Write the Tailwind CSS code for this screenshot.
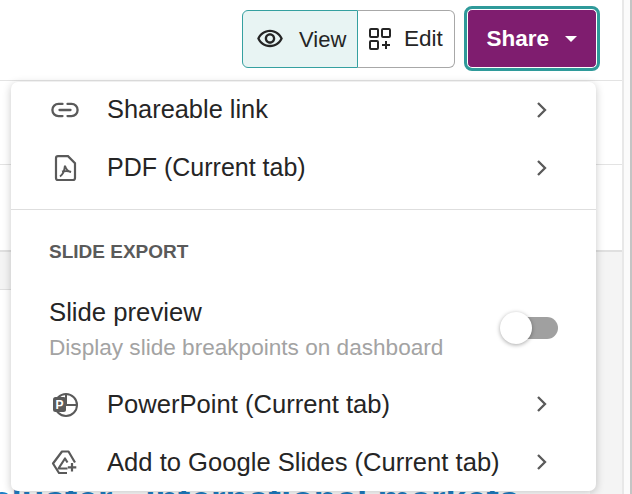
<!DOCTYPE html>
<html>
<head>
<meta charset="utf-8">
<script src="https://cdn.jsdelivr.net/npm/@tailwindcss/browser@4"></script>
</head>
<body class="m-0 bg-white">
<div class="relative w-[632px] h-[494px] overflow-hidden bg-white font-['Liberation_Sans',Arial,sans-serif] text-[#252525]">
  <!-- Header -->
  <header class="h-[81px] w-[622px] border-b border-[#e3e3e3] flex justify-end items-start pt-[10px] pr-[25px] gap-[12px]">
    <div class="flex h-[58px] w-[213px] text-[22px]">
      <div class="w-[116px] bg-[#e8f4f3] border border-[#35a0a0] rounded-l-[6px] flex items-center pl-[13px] gap-[15px]">
        <svg class="w-[28px] h-[28px] shrink-0" viewBox="0 0 24 24" fill="#252525"><path d="M12 6c3.790 0 7.170 2.130 8.820 5.500C19.170 14.870 15.790 17 12 17s-7.170-2.130-8.820-5.500C4.830 8.130 8.210 6 12 6m0-2C7 4 2.730 7.110 1 11.500 2.730 15.890 7 19 12 19s9.270-3.110 11-7.500C21.270 7.110 17 4 12 4zm0 5c1.380 0 2.500 1.120 2.500 2.500S13.380 14 12 14s-2.500-1.120-2.500-2.500S10.620 9 12 9m0-2c-2.480 0-4.500 2.020-4.500 4.500S9.520 16 12 16s4.500-2.020 4.500-4.500S14.480 7 12 7z"/></svg>
        <span>View</span>
      </div>
      <div class="flex-1 flex items-center pl-[11px] gap-[13px] border border-l-0 border-[#a8a8a8] rounded-r-[6px]">
        <svg class="w-[22px] h-[22px] shrink-0" viewBox="0 0 22 22" fill="none" stroke="#252525" stroke-width="2"><rect x="1" y="1" width="8" height="8" rx="1"/><rect x="13" y="1" width="8" height="8" rx="1"/><rect x="1" y="13" width="8" height="8" rx="1"/><path d="M17 13v8M13 17h8"/></svg>
        <span class="text-[22.5px]">Edit</span>
      </div>
    </div>
    <button class="h-[59px] w-[130px] -mt-px rounded-[5px] bg-[#7f1d6f] border-[1.5px] border-white outline-[3px] outline-[#2f9a9a] flex items-center pl-[18.500px] text-white font-bold text-[22.5px]">
      Share
      <svg class="ml-[16px] w-[12px] h-[6px] shrink-0" viewBox="0 0 12 6" fill="#fff"><path d="M0 0h12L6 6Z"/></svg>
    </button>
  </header>

  <!-- Background behind menu -->
  <div class="absolute left-0 top-[164px] w-[622px] h-px bg-[#e3e3e3]"></div>
  <div class="absolute left-0 top-[250px] w-[20px] h-[40px] bg-[#f4f4f4] border-t-2 border-b border-[#e0e0e0]"></div>
  <div class="absolute left-[590px] top-[250px] w-[32px] h-[244px] bg-[#f4f4f4] border-t-2 border-[#e0e0e0]"></div>
  <div class="absolute left-[622px] top-0 w-[2px] h-[494px] bg-[#e8e8e8]"></div>
  <div class="absolute left-[624px] top-0 w-[6px] h-[494px] bg-[#fbfbfb]"></div>
  <div class="absolute left-[630px] top-0 w-[2px] h-[494px] bg-[#c4c4c4]"></div>
  <div class="absolute left-[-9px] top-[478px] text-[#1f7fc4] font-bold text-[37px] leading-[44px] whitespace-nowrap">cluster - international markets</div>

  <!-- Menu -->
  <div class="absolute left-[11px] top-[82px] w-[585px] h-[409px] bg-white rounded-[7px] shadow-[0_2px_8px_rgba(0,0,0,0.22)]">
    <div class="h-[128px] border-b border-[#dedede]">
      <div class="h-[55px] flex items-center pl-[38px] pr-[48px]">
        <svg class="w-[32px] h-[32px] shrink-0" viewBox="0 0 32 32" fill="none" stroke="#5a5a5a" stroke-width="2.300" stroke-linecap="round"><path d="M13.500 9.900H9.500a6.100 6.100 0 0 0 0 12.200h4M18.500 9.900h4a6.100 6.100 0 0 1 0 12.200h-4M10.500 16h11"/></svg>
        <span class="ml-[26px] text-[25.4px] flex-1">Shareable link</span>
        <svg class="w-[12px] h-[18px] shrink-0" viewBox="0 0 12 18" fill="none" stroke="#5a5a5a" stroke-width="2.300"><path d="M2 2l7 7-7 7"/></svg>
      </div>
      <div class="h-[61px] flex items-center pl-[38px] pr-[48px]">
        <svg class="w-[32px] h-[32px] shrink-0" viewBox="0 0 32 32" fill="none" stroke="#5a5a5a" stroke-width="2.200"><path d="M9 4.200h10l7 7v14.800a2 2 0 0 1-2 2H9a2 2 0 0 1-2-2V6.200a2 2 0 0 1 2-2Z"/><path stroke-width="2" d="M11 24.500c3-2 4.500-6 5-11M13 19.500c3-.8 6.500-.8 9 .5M16 14c1 3 3 5.500 6 6"/></svg>
        <span class="ml-[26px] text-[25px] flex-1">PDF (Current tab)</span>
        <svg class="w-[12px] h-[18px] shrink-0" viewBox="0 0 12 18" fill="none" stroke="#5a5a5a" stroke-width="2.300"><path d="M2 2l7 7-7 7"/></svg>
      </div>
    </div>
    <div class="pl-[38px] pr-[38px] pt-[30px] text-[19px] leading-[24px] font-bold text-[#5a5a5a]">SLIDE EXPORT</div>
    <div class="relative flex pl-[38px] pt-[33px]">
      <div class="flex-1">
        <div class="text-[25.7px] leading-[30px]">Slide preview</div>
        <div class="text-[22.6px] leading-[28px] mt-[7px] text-[#a3a3a3]">Display slide breakpoints on dashboard</div>
      </div>
      <div class="relative w-[48px] h-[22px] rounded-full bg-[#a0a0a0] mr-[38px] mt-[20px]">
        <div class="absolute left-[-10px] top-[-5px] w-[32px] h-[32px] rounded-full bg-white shadow-[0_1px_4px_rgba(0,0,0,0.35)]"></div>
      </div>
    </div>
    <div class="h-[58px] mt-[13px] flex items-center pl-[38px] pr-[48px]">
      <svg class="w-[32px] h-[32px] shrink-0" viewBox="0 0 32 32" fill="none" stroke="#5a5a5a" stroke-width="2"><circle cx="17" cy="17" r="11"/><path d="M17 6v11h11"/><rect x="4" y="9" width="13" height="15" rx="2.500" fill="#5a5a5a" stroke="none"/><text x="10.500" y="21" text-anchor="middle" fill="#fff" stroke="none" font-size="12" font-weight="700" font-family="Liberation Sans">P</text></svg>
      <span class="ml-[26px] text-[25.6px] flex-1">PowerPoint (Current tab)</span>
      <svg class="w-[12px] h-[18px] shrink-0" viewBox="0 0 12 18" fill="none" stroke="#5a5a5a" stroke-width="2.300"><path d="M2 2l7 7-7 7"/></svg>
    </div>
    <div class="h-[58px] flex items-center pl-[38px] pr-[48px]">
      <svg class="w-[32px] h-[32px] shrink-0" viewBox="0 0 32 32" fill="none" stroke="#5a5a5a" stroke-width="2.200" stroke-linejoin="round"><path d="M18 27H10L4 17.500 13 5.500h6.500L26 16.500"/><path d="M18.500 22.500H9.500L16 12.500l2.500 4"/><path d="M23 17v8.500M18.800 21.300h8.500"/></svg>
      <span class="ml-[26px] text-[25.6px] flex-1 whitespace-nowrap">Add to Google Slides (Current tab)</span>
      <svg class="w-[12px] h-[18px] shrink-0" viewBox="0 0 12 18" fill="none" stroke="#5a5a5a" stroke-width="2.300"><path d="M2 2l7 7-7 7"/></svg>
    </div>
  </div>
</div>
</body>
</html>
